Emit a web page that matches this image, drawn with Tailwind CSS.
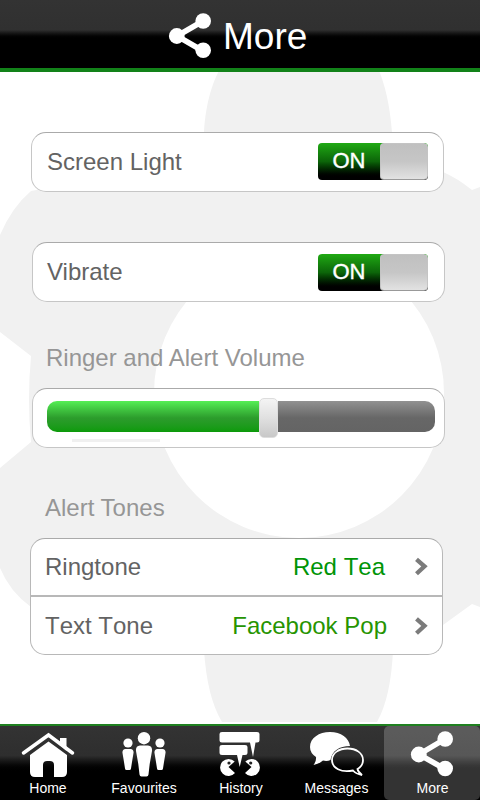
<!DOCTYPE html>
<html lang="en">
<head>
<meta charset="utf-8">
<title>More</title>
<script src="https://cdn.jsdelivr.net/npm/@tailwindcss/browser@4"></script>
</head>
<body class="bg-white">
<div class="relative isolate flex h-[800px] w-[480px] flex-col overflow-hidden font-['Liberation_Sans',Arial,sans-serif] text-2xl leading-7 text-[#636363]">
  <svg class="absolute inset-0 -z-10" width="480" height="800" viewBox="0 0 480 800" fill="#f1f1f1">
    <path d="M222 66C211 82 205 110 204 133V160L31 191Q12 207 0 235V332L31 356Q27 400 31 442L0 468V568Q10 592 31 607L204 650Q207 697 222 722H377Q391 697 393 650L443 625 472 604 480 607V187L472 190Q457 178 443 172L392 150V133Q389 92 377 66Z"/>
    <circle cx="299" cy="393" r="145" fill="#fff"/>
  </svg>

  <header class="flex h-[72px] shrink-0 items-center border-b-4 border-[#128219] bg-linear-to-b from-[#333] from-0% via-[#303030] via-44% to-black to-58% pl-[168px] text-[37px] leading-[44px] text-white">
    <svg class="mt-1 shrink-0" width="44" height="46" viewBox="0 0 44 46" fill="#fff">
      <path d="M35 8 9 23 35 38" fill="none" stroke="#fff" stroke-width="5.500"/>
      <circle cx="35.2" cy="8" r="7.8"/><circle cx="8.8" cy="23" r="7.9"/><circle cx="35.2" cy="37.3" r="7.8"/>
    </svg>
    <h1 class="mt-[5px] ml-[11px]">More</h1>
  </header>

  <main class="flex h-[652px] shrink-0 flex-col pl-[30px]">
    <section class="mt-[60px] ml-px flex h-[60px] w-[413px] shrink-0 items-center justify-between rounded-[15px] border border-t-[#aaa] border-[#c6c6c6] bg-white pr-[15px] pl-[15px]">
      <span>Screen Light</span>
      <div class="mb-[2px] flex h-[37px] w-[110px] overflow-hidden rounded-[4px] bg-linear-to-b from-[#20aa14] via-[#0c6509] via-50% to-black to-95% text-[22px] leading-[35px] text-white">
        <span class="w-[62px] text-center [-webkit-text-stroke:0.4px_white]">ON</span>
        <span class="flex-1 rounded-[4px] border border-[#c4c4c4] border-b-[#999] bg-linear-to-b from-[#c0c0c0] via-[#c6c6c6] via-50% to-[#e2e2e2]"></span>
      </div>
    </section>

    <section class="mt-[50px] ml-0.5 flex h-[60px] w-[413px] shrink-0 items-center justify-between rounded-[15px] border border-t-[#aaa] border-[#c6c6c6] bg-white pr-[16px] pl-[14px]">
      <span>Vibrate</span>
      <div class="flex h-[37px] w-[110px] overflow-hidden rounded-[4px] bg-linear-to-b from-[#20aa14] via-[#0c6509] via-50% to-black to-95% text-[22px] leading-[35px] text-white">
        <span class="w-[62px] text-center [-webkit-text-stroke:0.4px_white]">ON</span>
        <span class="flex-1 rounded-[4px] border border-[#c4c4c4] border-b-[#999] bg-linear-to-b from-[#c0c0c0] via-[#c6c6c6] via-50% to-[#e2e2e2]"></span>
      </div>
    </section>

    <h2 class="mt-[42px] ml-4 text-[#969696]">Ringer and Alert Volume</h2>
    <section class="mt-4 ml-0.5 flex h-[60px] w-[413px] shrink-0 flex-col rounded-[15px] border border-t-[#aaa] border-[#c6c6c6] bg-white pt-[9px] pl-[14px]">
      <div class="flex h-10 w-[388px] items-center">
        <div class="mb-[3px] h-[31px] w-[212px] rounded-l-[10px] bg-linear-to-b from-[#55ef55] via-[#2c9c2c] via-55% to-[#0a9a08]"></div>
        <div class="h-10 w-[19px] rounded-[5px] border border-[#ddd] bg-linear-to-b from-[#f4f4f4] via-[#e0e0e0] via-50% to-[#c8c8c8]"></div>
        <div class="mb-[3px] h-[31px] flex-1 rounded-r-[10px] bg-linear-to-b from-[#919191] via-[#676767] via-55% to-[#646464]"></div>
      </div>
      <div class="mt-px ml-[25px] h-[3px] w-[88px] bg-[#f0f0f0]"></div>
    </section>

    <h2 class="mt-[46px] ml-[15px] text-[#969696]">Alert Tones</h2>
    <section class="mt-4 flex h-[117px] w-[413px] shrink-0 flex-col rounded-[15px] border border-t-[#aaa] border-[#b8b8b8] bg-white [font-kerning:none]">
      <div class="flex h-[58px] items-center border-b-2 border-[#b8b8b8] pr-[14px] pl-[14px]">
        <span>Ringtone</span>
        <span class="ml-auto text-[#009406]">Red Tea</span>
        <svg class="ml-[29px]" width="14" height="20" viewBox="0 0 14 20"><path d="M2.5 2.3 10.5 9.3 2.5 16.8" fill="none" stroke="#7b7b7b" stroke-width="4.300"/></svg>
      </div>
      <div class="flex flex-1 items-center pr-[14px] pl-[14px]">
        <span>Text Tone</span>
        <span class="ml-auto text-[#269402]">Facebook Pop</span>
        <svg class="ml-[27px]" width="14" height="20" viewBox="0 0 14 20"><path d="M2.5 2.8 10.5 9.8 2.5 17.3" fill="none" stroke="#7b7b7b" stroke-width="4.300"/></svg>
      </div>
    </section>
  </main>

  <nav class="grid h-[76px] shrink-0 grid-cols-5 border-t-2 border-[#1f8020] bg-linear-to-b from-[#333] via-[#2e2e2e] via-40% to-black to-63% text-[14px] leading-4 text-white">
    <a class="flex flex-col items-center">
      <svg class="mt-[6px]" width="54" height="46" viewBox="0 0 54 46" fill="#fff">
        <path d="M39 6H45.500V19L39 13Z"/>
        <path d="M2.500 21 27.500 3 51.500 21" fill="none" stroke="#fff" stroke-width="3.500" stroke-linecap="round"/>
        <path fill-rule="evenodd" d="M27.500 9.500 46 23V40Q46 45 41 45H33V33Q33 29 29 29H26Q22 29 22 33V45H14Q9 45 9 40V23Z"/>
      </svg>
      <span class="mt-[2px]">Home</span>
    </a>
    <a class="flex flex-col items-center">
      <svg class="mt-[6px] mr-px" width="46" height="46" viewBox="0 0 46 46" fill="#fff">
        <circle cx="23" cy="6.200" r="6.200"/><circle cx="7" cy="11" r="4.600"/><circle cx="39" cy="11" r="4.600"/>
        <path d="M19 13.500H27Q31.500 14 31 19L28.700 32 27.500 42.500Q27.300 44.500 25.500 44.500H20.500Q18.700 44.500 18.500 42.500L17.300 32 15 19Q14.500 14 19 13.500Z"/>
        <path d="M4.500 17H9.500Q13 17.500 12.500 21L11 30 10 36.500Q9.800 38 8.500 38H5.500Q4.200 38 4 36.500L3 30 1.500 21Q1 17.500 4.500 17Z"/>
        <path d="M36.500 17H41.500Q45 17.500 44.500 21L43 30 42 36.500Q41.800 38 40.500 38H37.500Q36.200 38 36 36.500L35 30 33.500 21Q33 17.500 36.500 17Z"/>
      </svg>
      <span class="mt-[2px]">Favourites</span>
    </a>
    <a class="flex flex-col items-center pl-0.5">
      <svg class="mt-[6px] mr-[2px]" width="42" height="46" viewBox="0 0 42 46" fill="#fff">
        <path d="M3 0H38Q40.500 0 40.500 2V8Q40.500 10.500 38 10.500H36.500L34 25 31 10.500H3Q.5 10.500 .5 8V2Q.5 0 3 0Z"/>
        <path d="M3 13H26Q28.500 13 28.500 15V20.500Q28.500 23 26 23H23.500L20.700 35 18 23H3Q.5 23 .5 20.500V15Q.5 13 3 13Z"/>
        <path d="M9.500 35 15.700 29.500A8.500 8.500 0 1 0 16 41Z"/>
        <path d="M32.500 35 26.300 29.500A8.500 8.500 0 1 1 26 41Z"/>
        <circle cx="10" cy="31" r="1.600" fill="#222"/><circle cx="31.700" cy="31" r="1.600" fill="#222"/>
      </svg>
      <span class="mt-[2px]">History</span>
    </a>
    <a class="flex flex-col items-center pl-px">
      <svg class="mt-[6px]" width="54" height="46" viewBox="0 0 54 46" fill="#fff">
        <path d="M20 0C31 0 39 6 40 14C29 14 22 19 20.500 28Q17 29.500 13 28.500Q9 32 3.500 33Q6.500 29 6 25Q0 21 0 15C0 6 9 0 20 0Z"/>
        <path d="M37.500 16.500C46 16.500 53 21 53 28Q53 34 47.500 37Q48 40 52 43Q46 42 43 38.500C31 41 22 36 22 28C22 21 29 16.500 37.500 16.500Z" fill="none" stroke="#fff" stroke-width="1.800"/>
      </svg>
      <span class="mt-[2px]">Messages</span>
    </a>
    <a class="flex flex-col items-center rounded-[5px] bg-white/20 pl-px">
      <svg class="mt-[5px] mr-px" width="44" height="47" viewBox="0 0 44 47" fill="#fff">
        <path d="M35 8 9 23.500 35 38" fill="none" stroke="#fff" stroke-width="5.500"/>
        <circle cx="35.200" cy="8" r="7.800"/><circle cx="8.800" cy="23.500" r="7.900"/><circle cx="35.200" cy="37.500" r="7.800"/>
      </svg>
      <span class="mt-[2px]">More</span>
    </a>
  </nav>
</div>
</body>
</html>
